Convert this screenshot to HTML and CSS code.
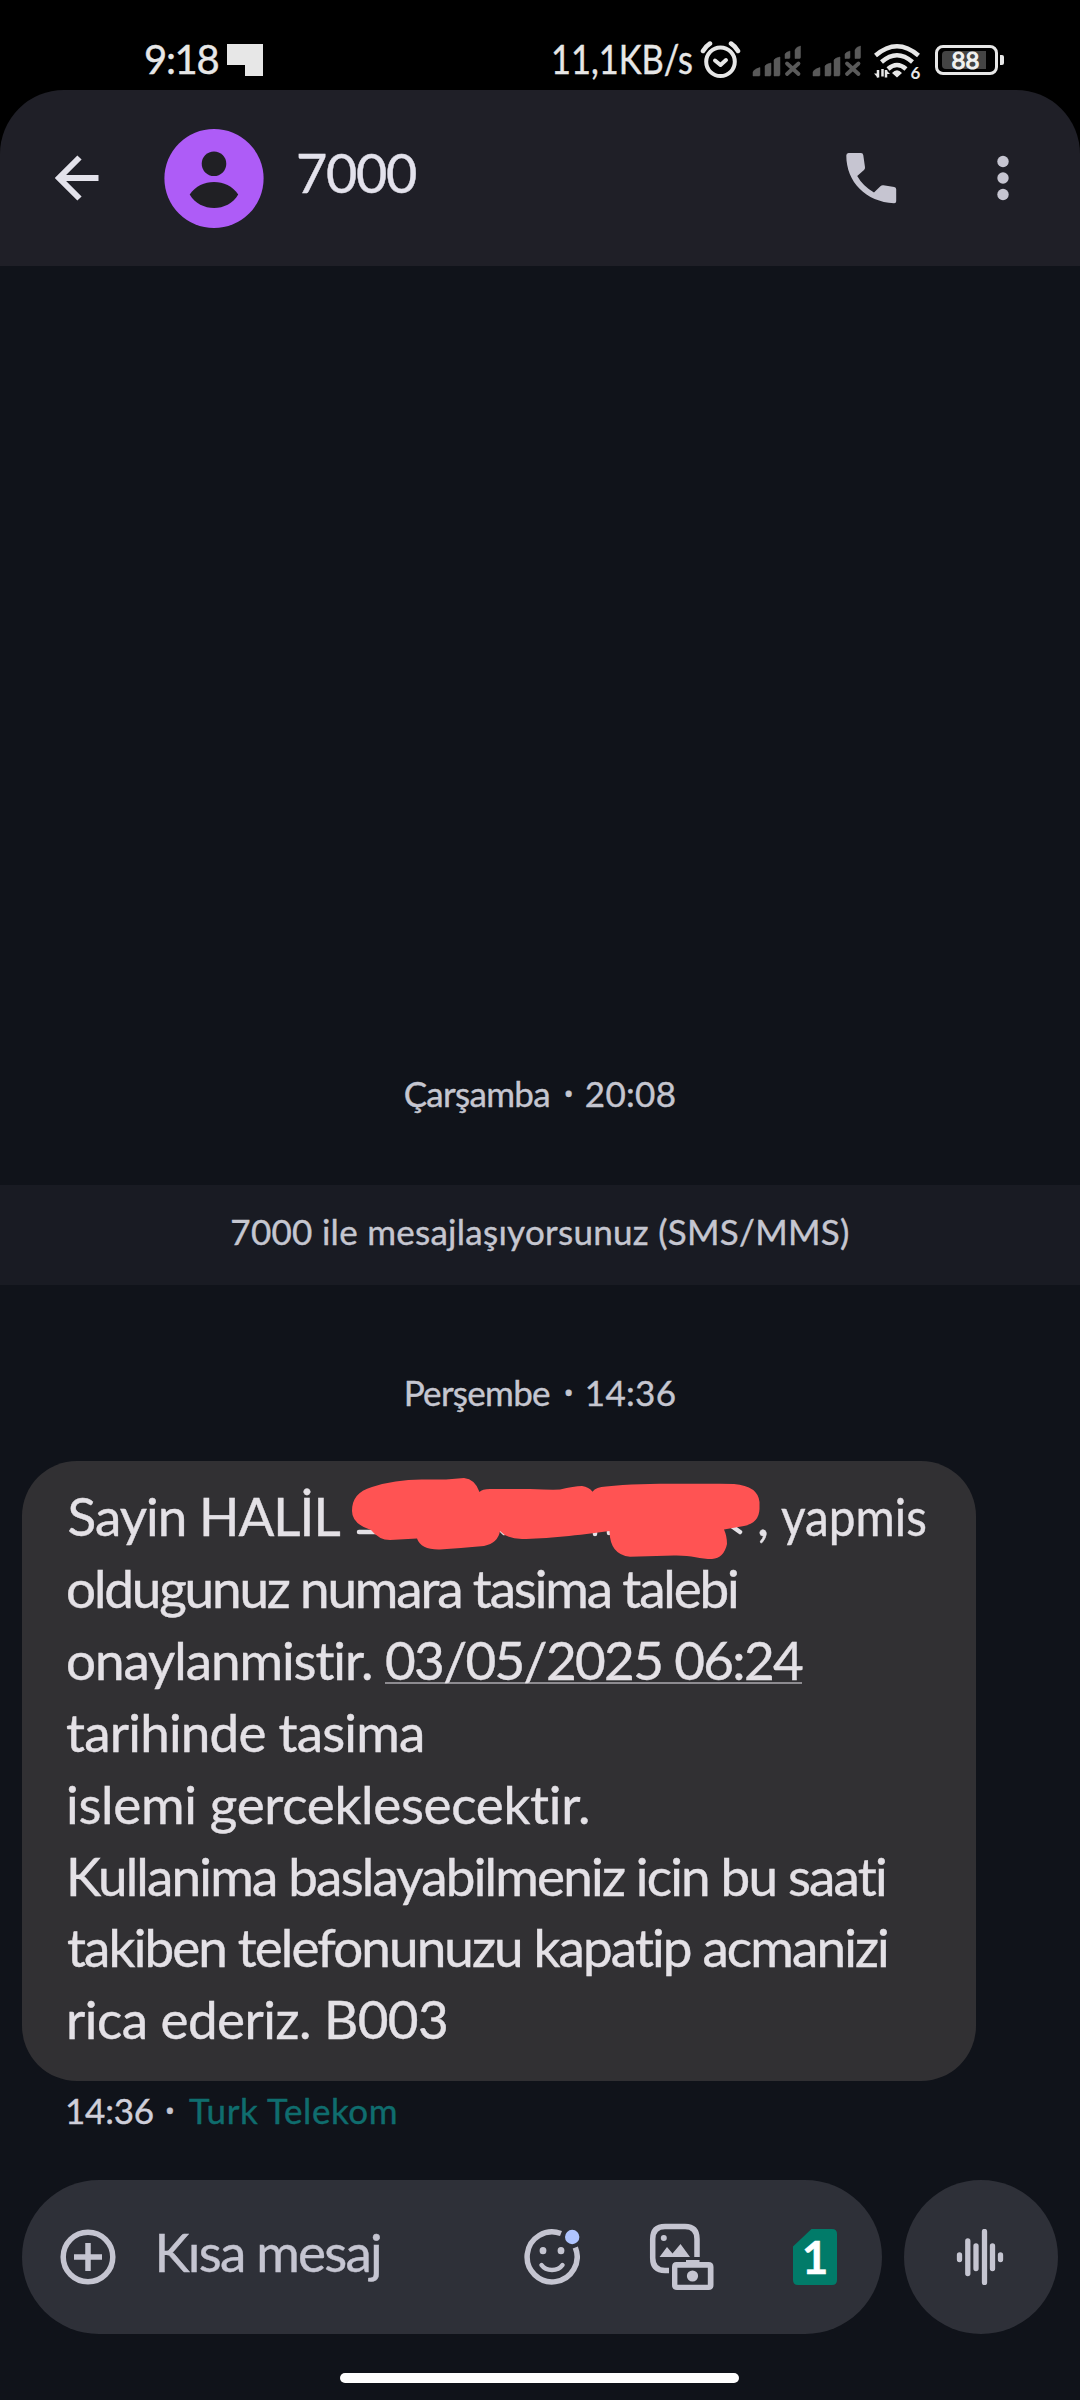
FILE: index.html
```
<!DOCTYPE html>
<html lang="tr">
<head>
<meta charset="utf-8">
<title>7000</title>
<link rel="stylesheet" href="styles.css">
</head>
<body>
<div class="phone">
  <div class="status">
    <span class="clock">9:18</span>
    <svg class="flag" width="38" height="90" viewBox="226 0 38 90"><path d="M227 44h36v32h-18V65h-18z"/></svg>
    <span class="speed">11,1KB/s</span>
    <svg class="alarm" width="42" height="90" viewBox="700 0 42 90"><g fill="none" stroke-linecap="round" stroke-linejoin="round"><circle cx="720.5" cy="61.7" r="14.3" stroke-width="4"/><path d="M715 60.500l5.500 4.500 5.500-5" stroke-width="4"/><path d="M703 51q3-5 7-7.500M738 51q-3-5-7-7.500" stroke-width="4.500"/></g></svg>
    <svg class="signal" width="50" height="90" viewBox="752 0 50 90"><path d="M753 76v-4q1-3 7-4.500v7.500q0 1-1 1zM765 76V66q1-2 6-3v11q0 2-1 2zM774 76V60q1-2 6-3v17q0 2-1 2zM785 58.500V54q1-2 5-3v6q0 1.500-1 1.500zM795 58.500V50q1-3 5.500-4v11q0 1.500-1 1.500z"/><path d="M787 63.500l11.500 10.500M798.500 63.500L787 74" fill="none" stroke-width="3.800" stroke-linecap="round"/></svg>
    <svg class="signal second" width="50" height="90" viewBox="752 0 50 90"><path d="M753 76v-4q1-3 7-4.500v7.500q0 1-1 1zM765 76V66q1-2 6-3v11q0 2-1 2zM774 76V60q1-2 6-3v17q0 2-1 2zM785 58.500V54q1-2 5-3v6q0 1.500-1 1.500zM795 58.500V50q1-3 5.500-4v11q0 1.500-1 1.500z"/><path d="M787 63.500l11.500 10.500M798.500 63.500L787 74" fill="none" stroke-width="3.800" stroke-linecap="round"/></svg>
    <svg class="wifi" width="50" height="90" viewBox="873 0 50 90"><g fill="none" stroke-width="4.500"><path d="M875.500 55.500q21.500-18.500 43 0M881.500 62q15.500-13.500 31 0M888 69q9-8 18 0"/><path d="M878 70v7.500M882.500 69v7.500M886 70v7.500" stroke-width="2.500"/></g><path d="M892 73q5-5.500 10 0l-5 4.500zM874 73.500h4v4.500zM886 70l4 4h-4z"/><text x="910.500" y="78.500">6</text></svg>
    <div class="battery"><div class="charge"></div><span>88</span></div>
    <div class="nub"></div>
  </div>

  <header class="bar">
    <svg class="back" width="50" height="176" viewBox="53 90 50 176"><path d="M98.500 178H59M79.500 157.500L59 178l20.500 20.500"/></svg>
    <svg class="avatar" width="100" height="176" viewBox="164.500 90 100 176"><circle cx="214.500" cy="178.500" r="49.600" fill="#ae5cf7"/><circle cx="214.500" cy="163.700" r="12.300" fill="#202024"/><path d="M190.200 194.500C196 186 205 182 214.500 182S233 186 238.700 194.500C233.500 203.500 224 208 214.500 208S195.500 203.500 190.200 194.500z" fill="#202024"/></svg>
    <h1>7000</h1>
    <svg class="call" width="52" height="176" viewBox="845 90 52 176"><path d="M848.500 153H861q2 0 2.300 2.300l1.700 12q.2 1.700-1 2.700l-6.800 6q5.600 10 16.800 16.500l6.400-6.200q1.200-1.200 3-1l10.800 1.600q2 .4 2 2.400v12q0 2-2.200 1.900C866 202 846.300 182 846.300 155.500q0-2.500 2.200-2.500z"/></svg>
    <svg class="more" width="12" height="176" viewBox="997 90 12 176"><circle cx="1003" cy="161.500" r="5.700"/><circle cx="1003" cy="178" r="5.700"/><circle cx="1003" cy="194.500" r="5.700"/></svg>
  </header>

  <main class="thread">
    <div class="date"><span class="day">Çarşamba</span><i class="dot">•</i><span class="hour">20:08</span></div>
    <div class="notice">7000 ile mesajlaşıyorsunuz (SMS/MMS)</div>
    <div class="date later"><span class="day">Perşembe</span><i class="dot">•</i><span class="hour">14:36</span></div>
    <div class="bubble">
      <p class="l1"><span class="name">Sayin HALİL</span><span class="comma">,</span><span class="yap">yapmis</span></p>
      <p class="l2">oldugunuz numara tasima talebi</p>
      <p class="l3"><span>onaylanmistir.</span><a class="when">03/05/2025 06:24</a></p>
      <p class="l4">tarihinde tasima</p>
      <p class="l5">islemi gerceklesecektir.</p>
      <p class="l6">Kullanima baslayabilmeniz icin bu saati</p>
      <p class="l7">takiben telefonunuzu kapatip acmanizi</p>
      <p class="l8">rica ederiz. B003</p>
      <svg class="scribble" width="420" height="100" viewBox="345 1470 420 100">
        <path d="M359 1532h17M500 1529l4 4M595 1528v6M609 1530v3M733 1527l7 5" fill="none" stroke="#e4e1e6" stroke-width="4.500" stroke-linecap="round"/>
        <path fill="#ff5353" d="M352 1511C352 1499 358 1491 372 1487Q396 1479 425 1479.500L446 1479.500 464 1478Q475 1479 479.500 1492Q482 1489 490 1489H530Q552 1490 560 1489.500Q574 1486 582 1486Q589 1487 592.500 1491.700Q596 1487 606 1486.500C640 1483 680 1484 734 1484Q758 1486 759.500 1502V1509Q759 1523 744 1526L724 1529.500Q727 1536 727 1544Q724 1558 712 1559C700 1559 690 1555 674 1555.500L630 1556.700Q610 1555 609.500 1531C580 1535 545 1539 522 1539Q507 1539 500 1531Q498 1543 484 1546Q460 1548 440 1549.500Q421 1550 417 1538.500L390 1540Q379 1540 371 1530Q352 1524 352 1511z"/>
      </svg>
    </div>
    <div class="meta"><span class="sent">14:36</span><i class="dot">•</i><span class="sim-name">Turk Telekom</span></div>
  </main>

  <footer class="composer">
    <div class="field">
      <svg class="plus" width="56" height="154" viewBox="60 2180 56 154"><circle cx="88" cy="2257" r="24.800" stroke-width="5.500"/><path d="M74 2257h28M88 2243v28" stroke-width="5.500"/></svg>
      <span class="hint">Kısa mesaj</span>
      <svg class="smile" width="56" height="154" viewBox="524 2180 56 154"><g fill="none" stroke="#c5c5d1" stroke-width="5.500"><path d="M561 2233.500A25 25 0 1 0 575.300 2247.500"/><path d="M541.500 2265Q545 2270 552 2270T562.500 2265" stroke-width="4.500" stroke-linecap="round"/></g><ellipse cx="543" cy="2250.700" rx="3.400" ry="3.600" fill="#c5c5d1"/><ellipse cx="561" cy="2250.700" rx="3.400" ry="3.600" fill="#c5c5d1"/><circle cx="572.200" cy="2237" r="7.200" fill="#b0c5ff"/></svg>
      <svg class="gallery" width="66" height="154" viewBox="650 2180 66 154"><path d="M698 2257V2239Q698 2226.500 686 2226.500H666Q653.700 2226.500 653.700 2239V2258Q653.700 2270.500 666 2270.500H670" fill="none" stroke="#c5c5d1" stroke-width="5.500"/><circle cx="664.800" cy="2238" r="3" fill="#c5c5d1"/><path d="M660.500 2257l7.500-10 5.500 6.500 8-9.500 9.500 13z" fill="#c5c5d1"/><path d="M677.500 2262h9.500v-2h13.500v2h9q5 0 5 5v18q0 5-5 5h-31.500q-5 0-5-5v-18q0-5 4.500-5zm.9 5.800v17h30.400v-17z" fill="#c5c5d1" fill-rule="evenodd"/><circle cx="693.500" cy="2276" r="5.600" fill="#c5c5d1"/></svg>
      <div class="sim"><svg width="44" height="56" viewBox="0 0 44 56"><path d="M18.500 0H39q5 0 5 5v46q0 5-5 5H5q-5 0-5-5V17.500z" fill="#017b69"/></svg><b>1</b></div>
    </div>
    <div class="voice"><svg width="48" height="56" viewBox="955.500 2229 48 56"><path d="M959 2255v4.500M967.300 2241v32.500M975.500 2246v22.500M984 2231.500v51M992 2246v22.500M1000 2255v4.500"/></svg></div>
  </footer>
  <div class="home"></div>
</div>
</body>
</html>
```
FILE: styles.css
```
* { box-sizing: border-box; }
body { margin: 0; background: #000; font-family: Lato, "Noto Sans", sans-serif; }
p, h1 { margin: 0; font-weight: 400; }
i { font-style: normal; }
svg { display: block; flex: none; }
.phone { width: 1080px; height: 2400px; display: flex; flex-direction: column; background: linear-gradient(#000 160px, #10131a 160px); overflow: hidden; white-space: nowrap; -webkit-text-stroke: .4px currentColor; }

.status { height: 90px; flex: none; display: flex; align-items: flex-start; color: #e7e7e7; font-size: 40px; line-height: 119px; padding-left: 144px; }
.status svg { fill: #e7e7e7; stroke: none; }
.clock { width: 82px; letter-spacing: -1.3px; }
.speed { width: 149px; margin-left: 287px; transform: scaleX(.86); transform-origin: left; }
.status .alarm { stroke: #e7e7e7; }
.status .signal { fill: #5a5a5a; stroke: #5a5a5a; stroke-width: .5; margin-left: 10px; }
.status .second { margin-left: 10px; }
.status .wifi { margin-left: 11px; }
.wifi g { stroke: #e7e7e7; }
.wifi text { font-size: 17px; font-weight: 700; }
.battery { width: 63px; height: 30px; margin: 45px 0 0 12px; border: 3px solid #e7e7e7; border-radius: 8px; display: grid; line-height: 28px; font-size: 24px; padding: 3px 0 0 3.500px; }
.battery > * { grid-area: 1 / 1; }
.battery span { margin: -5px 0 0 10px; letter-spacing: 0; color: #f2f2f2; -webkit-text-stroke-width: 1px; }
.charge { width: 44px; height: 18px; background: #444; border-radius: 4px 0 0 4px; }
.nub { width: 4px; height: 10px; background: #e7e7e7; border-radius: 0 2px 2px 0; margin: 55px 0 0 2px; }

.bar { height: 176px; flex: none; display: flex; background: #1f1f27; border-radius: 64px 64px 0 0; padding-left: 53px; }
.back { fill: none; stroke: #e3e2eb; stroke-width: 6; }
.avatar { margin-left: 61px; }
.bar h1 { margin-left: 32px; width: 549px; color: #e3e2ec; font-size: 54px; line-height: 166px; letter-spacing: -1.300px; }
.call { fill: #c6c5d1; }
.more { fill: #c6c5d1; margin-left: 100px; }

.thread { height: 1914px; flex: none; background: #10131a; padding-top: 776px; color: #c5c6d0; font-size: 35px; }
.date { height: 100px; line-height: 102px; display: flex; justify-content: center; }
.dot { font-family: "Noto Sans", sans-serif; font-size: 26px; width: 9px; margin: 0 12px 0 14px; }
.day { letter-spacing: -.7px; }
.hour { letter-spacing: .3px; }
.notice { height: 100px; margin-top: 43px; background: #191b23; line-height: 93px; text-align: center; letter-spacing: .28px; }
.later { margin-top: 56px; }
.bubble { position: relative; margin: 20px 0 0 22px; width: 954px; height: 620px; padding: 19px 0 0 44px; background: #313033; border-radius: 55px; color: #e4e1e6; font-size: 53px; line-height: 71.900px; }
.l1, .l3 { display: flex; }
.name { width: 691px; letter-spacing: -.97px; padding-left: 1.500px; }
.comma { width: 24px; }
.yap { transform: scaleX(.9); transform-origin: left; }
.l2 { letter-spacing: -2.150px; }
.l3 span { width: 319px; letter-spacing: -1.090px; }
.when { letter-spacing: -1.660px; height: 60px; border-bottom: 2px solid #8d8b90; }
.l4 { letter-spacing: -.8px; }
.l5 { letter-spacing: -.31px; }
.l6 { letter-spacing: -1.820px; }
.l7 { letter-spacing: -1.880px; padding-left: 1px; }
.l8 { letter-spacing: -.54px; }
.scribble { position: absolute; left: 323px; top: 9px; }
.meta { display: flex; margin: 3px 0 0 65px; line-height: 52px; }
.sent { width: 88px; color: #cfcfda; letter-spacing: -.2px; }
.meta .dot { margin: 0 13px 0 12px; }
.sim-name { color: #0f6d6e; letter-spacing: .6px; margin-left: 2px; }

.composer { height: 154px; flex: none; display: flex; padding-left: 22px; background: #10131a; }
.field { width: 860px; height: 154px; border-radius: 77px; background: #2e3038; display: flex; padding-left: 38px; }
.plus { fill: none; stroke: #c5c5d1; }
.hint { width: 368px; margin-left: 38.500px; font-size: 53px; line-height: 144px; letter-spacing: -1.790px; color: #c5c5d1; }
.smile { margin-left: 1.500px; }
.gallery { margin-left: 69px; }
.sim { display: grid; width: 44px; height: 56px; margin: 49px 0 0 78px; }
.sim > * { grid-area: 1 / 1; }
.sim b { color: #fff; font-size: 46px; line-height: 56px; text-align: center; }
.voice { width: 154px; height: 154px; margin-left: 22px; border-radius: 50%; background: #2e3038; display: grid; place-items: center; padding-right: 3px; }
.voice svg { fill: none; stroke: #c5c5d1; stroke-width: 5.300; stroke-linecap: round; }
.home { width: 399px; height: 10px; margin: 39px 0 0 340px; border-radius: 5px; background: #fff; }
```
